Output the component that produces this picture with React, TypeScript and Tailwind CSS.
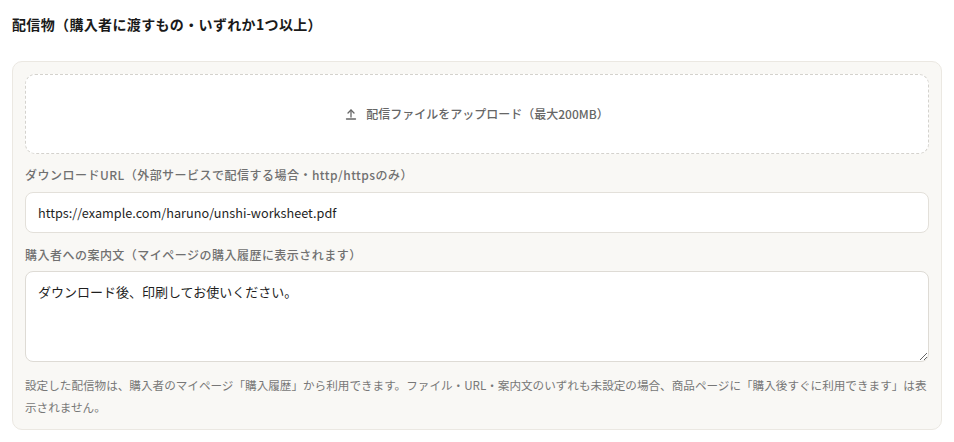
import React from "react";

export default function App() {
  const font = { fontFamily: '"Noto Sans CJK JP", "Noto Sans", sans-serif' };
  return (
    <div className="w-[954px] h-[442px] bg-white px-3 pt-[14px]" style={font}>
      <h2 className="text-[14px] leading-[20px] font-bold text-[#1a1a1a] tracking-[0.025em]">
        配信物（購入者に渡すもの・いずれか1つ以上）
      </h2>
      <div className="mt-[27px] rounded-[10px] border border-[#ebe8e2] bg-[#f9f8f5] px-3 pt-3 pb-[11px]">
        <button
          type="button"
          className="flex h-[80px] w-full items-center justify-center gap-[9px] rounded-[10px] border border-dashed border-[#d4d2cd] bg-white text-[12px] font-medium text-[#666]"
        >
          <svg width="12" height="12" viewBox="0 0 12 12" fill="none" stroke="#666" strokeWidth="1.3" strokeLinecap="round" strokeLinejoin="round">
            <path d="M6 9V2.2" />
            <path d="M3 5l3-3 3 3" />
            <path d="M1.5 11h9" />
          </svg>
          <span>配信ファイルをアップロード（最大200MB）</span>
        </button>

        <label className="mt-[12px] block text-[12px] leading-[18px] font-medium text-[#707070] tracking-[0.04em]">
          ダウンロードURL（外部サービスで配信する場合・http/httpsのみ）
        </label>
        <div className="mt-[8px] flex h-[41px] items-center rounded-[8px] border border-[#e3e0da] bg-white px-3 text-[12.7px] text-[#1f1f1f]">
          https://example.com/haruno/unshi-worksheet.pdf
        </div>

        <label className="mt-[13px] block text-[12px] leading-[18px] font-medium text-[#707070] tracking-[0.04em]">
          購入者への案内文（マイページの購入履歴に表示されます）
        </label>
        <textarea
          className="mt-[7px] block h-[91px] w-full resize-y rounded-[8px] border border-[#dedbd5] bg-white px-3 py-[10px] text-[13px] leading-[20px] text-[#1f1f1f] outline-none"
          style={font}
          defaultValue="ダウンロード後、印刷してお使いください。"
        />

        <p className="mt-[12px] text-[11.6px] leading-[22px] text-[#777]">
          設定した配信物は、購入者のマイページ「購入履歴」から利用できます。ファイル・URL・案内文のいずれも未設定の場合、商品ページに「購入後すぐに利用できます」は表示されません。
        </p>
      </div>
    </div>
  );
}
